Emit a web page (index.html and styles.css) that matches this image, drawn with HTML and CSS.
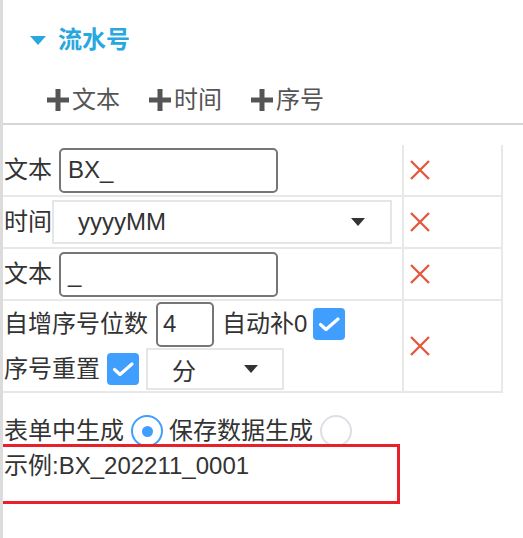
FILE: index.html
```html
<!DOCTYPE html>
<html lang="zh">
<head>
<meta charset="utf-8">
<link rel="stylesheet" href="styles.css">
</head>
<body>
<div class="page">
  <div class="header">
    <svg class="tri" width="16" height="9" viewBox="0 0 16 9"><polygon points="0,0 16,0 8,9" fill="#29a8e0"/></svg>
    <span class="title">流水号</span>
  </div>
  <div class="toolbar">
    <span class="tool"><svg width="24" height="24" viewBox="0 0 24 24"><path d="M12 1V23M1 12H23" stroke="#555" stroke-width="5"/></svg>文本</span>
    <span class="tool"><svg width="24" height="24" viewBox="0 0 24 24"><path d="M12 1V23M1 12H23" stroke="#555" stroke-width="5"/></svg>时间</span>
    <span class="tool"><svg width="24" height="24" viewBox="0 0 24 24"><path d="M12 1V23M1 12H23" stroke="#555" stroke-width="5"/></svg>序号</span>
  </div>
  <div class="rule"></div>
  <div class="table">
    <div class="row">
      <div class="cell main"><span class="label">文本</span><span class="input wide">BX_</span></div>
      <div class="cell del"><svg width="20" height="20" viewBox="0 0 20 20"><path d="M1 1L19 19M19 1L1 19" stroke="#e4573d" stroke-width="2.3"/></svg></div>
    </div>
    <div class="row">
      <div class="cell main"><span class="label">时间</span><span class="select time"><span>yyyyMM</span><i class="caret"></i></span></div>
      <div class="cell del"><svg width="20" height="20" viewBox="0 0 20 20"><path d="M1 1L19 19M19 1L1 19" stroke="#e4573d" stroke-width="2.3"/></svg></div>
    </div>
    <div class="row">
      <div class="cell main"><span class="label">文本</span><span class="input wide">_</span></div>
      <div class="cell del"><svg width="20" height="20" viewBox="0 0 20 20"><path d="M1 1L19 19M19 1L1 19" stroke="#e4573d" stroke-width="2.3"/></svg></div>
    </div>
    <div class="row tall">
      <div class="cell main stack">
        <div class="line one">
          <span class="label">自增序号位数</span><span class="input num">4</span><span class="label gap">自动补0</span>
          <span class="check"><svg width="32" height="32" viewBox="0 0 32 32"><path d="M7.5 16.5L13 21.5L25 11" fill="none" stroke="#fff" stroke-width="3.2" stroke-linecap="round" stroke-linejoin="round"/></svg></span>
        </div>
        <div class="line two">
          <span class="label">序号重置</span>
          <span class="check"><svg width="32" height="32" viewBox="0 0 32 32"><path d="M7.5 16.5L13 21.5L25 11" fill="none" stroke="#fff" stroke-width="3.2" stroke-linecap="round" stroke-linejoin="round"/></svg></span>
          <span class="select unit"><span>分</span><i class="caret"></i></span>
        </div>
      </div>
      <div class="cell del"><svg width="20" height="20" viewBox="0 0 20 20"><path d="M1 1L19 19M19 1L1 19" stroke="#e4573d" stroke-width="2.3"/></svg></div>
    </div>
  </div>
  <div class="radios">
    <span class="label">表单中生成</span><span class="radio on"></span>
    <span class="label">保存数据生成</span><span class="radio"></span>
  </div>
  <div class="example">示例:BX_202211_0001</div>
  <div class="mark"></div>
</div>
</body>
</html>
```
FILE: styles.css
```css
html, body {
  margin: 0;
  padding: 0;
  background: #fff;
}
.page {
  position: relative;
  box-sizing: border-box;
  width: 523px;
  min-height: 538px;
  border-left: 3px solid #dcdcdc;
  font-family: "Liberation Sans", "Noto Sans CJK SC", sans-serif;
  font-size: 24px;
  color: #333;
  overflow: hidden;
}
.header {
  display: flex;
  align-items: center;
  height: 34px;
  margin-top: 23px;
  padding-left: 27px;
}
.tri {
  margin-top: 1px;
}
.title {
  margin-left: 12px;
  font-weight: bold;
  color: #29a8e0;
  line-height: 34px;
}
.toolbar {
  display: flex;
  align-items: center;
  gap: 28px;
  height: 34px;
  margin-top: 26px;
  padding-left: 43px;
  color: #555;
}
.tool {
  display: flex;
  align-items: center;
  line-height: 34px;
}
.tool svg {
  margin-right: 2px;
}
.rule {
  height: 2px;
  margin-top: 6px;
  background: #d6d6d6;
}
.table {
  margin-top: 20px;
  width: 500px;
}
.row {
  display: flex;
  height: 52px;
  box-sizing: border-box;
  border-bottom: 2px solid #e8e8e8;
}
.row.tall {
  height: 92px;
}
.cell {
  box-sizing: border-box;
  border-right: 2px solid #e8e8e8;
  display: flex;
  align-items: center;
}
.cell.main {
  width: 401px;
  padding-left: 1px;
}
.cell.del {
  width: 99px;
  padding-left: 6px;
}
.label {
  line-height: 32px;
  white-space: nowrap;
}
.input {
  box-sizing: border-box;
  display: flex;
  align-items: center;
  height: 45px;
  border: 2px solid #767676;
  border-radius: 5px;
  padding-left: 7px;
  margin-left: 7px;
  color: #333;
}
.input.wide {
  width: 219px;
}
.input.num {
  width: 58px;
  margin-left: 8px;
  padding-left: 5px;
}
.select {
  box-sizing: border-box;
  display: flex;
  align-items: center;
  justify-content: space-between;
  border: 2px solid #e6e6e6;
  padding-left: 24px;
  color: #333;
}
.select.time {
  width: 340px;
  height: 44px;
  padding-right: 25px;
}
.select.unit {
  width: 138px;
  height: 42px;
  margin-left: 7px;
  padding-right: 24px;
}
.caret {
  width: 0;
  height: 0;
  border-left: 7.5px solid transparent;
  border-right: 7.5px solid transparent;
  border-top: 8px solid #333;
}
.cell.stack {
  flex-direction: column;
  align-items: flex-start;
}
.line {
  display: flex;
  align-items: center;
}
.line.one {
  height: 46px;
}
.line.two {
  height: 44px;
}
.label.gap {
  margin-left: 8px;
}
.check {
  display: block;
  width: 32px;
  height: 32px;
  border-radius: 4px;
  background: #409eff;
  margin-left: 6px;
}
.check svg {
  display: block;
}
.line.two .check {
  margin-left: 7px;
}
.radios {
  display: flex;
  align-items: center;
  height: 32px;
  margin-top: 22px;
  padding-left: 1px;
}
.radio {
  box-sizing: border-box;
  width: 32px;
  height: 32px;
  border-radius: 50%;
  border: 2px solid #dcdfe6;
  margin: 0 6px 0 7px;
  display: flex;
  align-items: center;
  justify-content: center;
}
.radio.on {
  border-color: #409eff;
}
.radio.on::after {
  content: "";
  width: 11px;
  height: 11px;
  border-radius: 50%;
  background: #409eff;
}
.example {
  margin-top: 3px;
  line-height: 32px;
  padding-left: 1px;
}
.mark {
  position: absolute;
  left: -3px;
  top: 444px;
  width: 400px;
  height: 60px;
  box-sizing: border-box;
  border: 3px solid #e8202a;
}
```
